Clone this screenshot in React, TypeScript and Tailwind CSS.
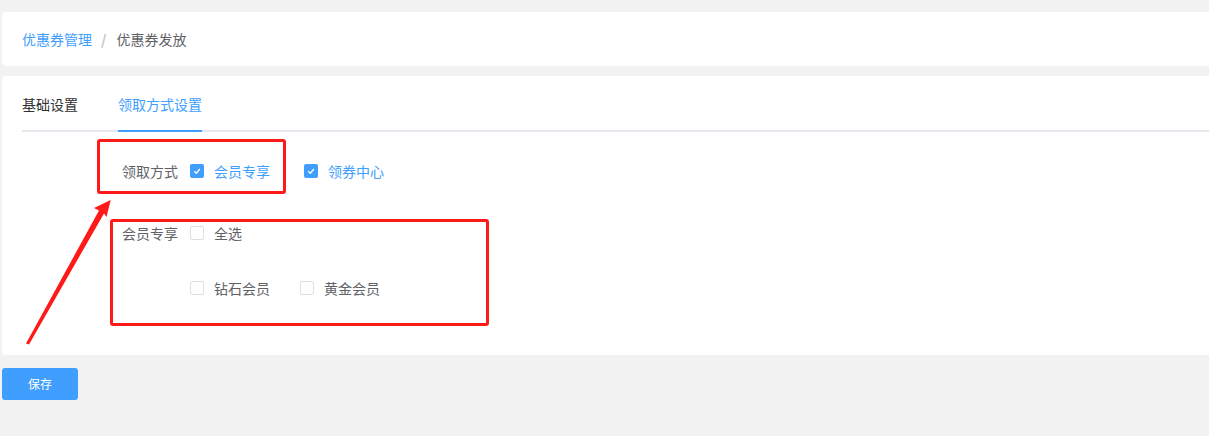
const font = { fontFamily: '"Noto Sans CJK SC", "Noto Sans", sans-serif' };

function Check({ checked }: { checked: boolean }) {
  if (checked) {
    return (
      <span className="inline-flex h-[14px] w-[14px] items-center justify-center rounded-[2px] bg-[#409eff]">
        <svg width="10" height="10" viewBox="0 0 10 10">
          <path d="M2.2 5.2 L4.3 7.2 L7.9 3" fill="none" stroke="#fff" strokeWidth="1.3" />
        </svg>
      </span>
    );
  }
  return <span className="inline-block h-[14px] w-[14px] rounded-[2px] border border-[#dcdfe6] bg-white" />;
}

function Option({ label, checked, className }: { label: string; checked: boolean; className?: string }) {
  return (
    <label className={"flex items-center " + (className ?? "")}>
      <Check checked={checked} />
      <span className={"pl-[10px] text-[14px] leading-[20px] " + (checked ? "text-[#409eff]" : "text-[#606266]")}>
        {label}
      </span>
    </label>
  );
}

export default function App() {
  return (
    <div className="h-[436px] overflow-hidden bg-[#f2f2f2] pt-[12px] pl-[2px]" style={font}>
      {/* 面包屑 */}
      <div className="flex h-[54px] items-center rounded-l-[4px] bg-white pl-5 text-[14px]">
        <span className="text-[#409eff]">优惠券管理</span>
        <span className="ml-[9px] mr-[10px] font-bold text-[#c0c4cc]">/</span>
        <span className="text-[#606266]">优惠券发放</span>
      </div>

      <div className="relative mt-[10px] h-[279px] rounded-l-[4px] bg-white pl-5">
        {/* tabs */}
        <div className="flex border-b-2 border-[#e4e7ed] pt-[18px] text-[14px] leading-[20px]">
          <div className="-mb-[2px] border-b-2 border-transparent pr-10 pb-[16px] text-[#303133]">基础设置</div>
          <div className="-mb-[2px] border-b-2 border-[#409eff] pb-[16px] text-[#409eff]">领取方式设置</div>
        </div>

        {/* 表单 */}
        <div className="ml-[88px] mt-[29px]">
          <div className="flex items-center">
            <div className="w-[80px] pr-3 text-right text-[14px] leading-[20px] text-[#606266]">领取方式</div>
            <Option label="会员专享" checked className="mr-[34px]" />
            <Option label="领券中心" checked />
          </div>

          <div className="mt-[42px] flex items-center">
            <div className="w-[80px] pr-3 text-right text-[14px] leading-[20px] text-[#606266]">会员专享</div>
            <Option label="全选" checked={false} />
          </div>

          <div className="mt-[35px] flex items-center pl-[80px]">
            <Option label="钻石会员" checked={false} className="mr-[30px]" />
            <Option label="黄金会员" checked={false} />
          </div>
        </div>

        {/* 标注 */}
        <div className="pointer-events-none absolute left-[95px] top-[63px] h-[55px] w-[189px] rounded-[3px] border-[3px] border-[#ff1a1a]" />
        <div className="pointer-events-none absolute left-[108px] top-[143px] h-[107px] w-[379px] rounded-[3px] border-[3px] border-[#ff1a1a]" />
        <svg className="pointer-events-none absolute left-0 top-0" width="200" height="279">
          <polygon
            points="108.7,124 92,132 97,134.5 24,267.5 27,268.5 102,137.5 104.5,141"
            fill="#ff1a1a"
          />
        </svg>
      </div>

      <button className="mt-[13px] h-[32px] w-[76px] rounded-[3px] bg-[#409eff] text-[12px] text-white">保存</button>
    </div>
  );
}
